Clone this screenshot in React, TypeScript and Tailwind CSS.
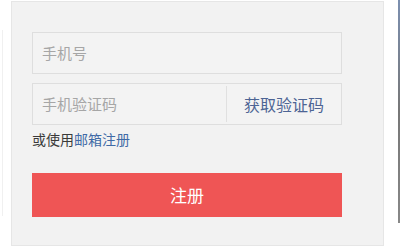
import React from 'react';

const font = { fontFamily: '"Noto Sans CJK SC", "Liberation Sans", sans-serif' };

export default function App() {
  return (
    <div className="flex h-[248px] w-[400px] bg-white overflow-hidden" style={font}>
      {/* left edge strip */}
      <div className="w-[11px] shrink-0 pl-[2px] pt-[30px]">
        <div className="h-[186px] w-px bg-[#f0f0f0]" />
      </div>

      {/* form panel */}
      <div className="mt-px h-[245px] w-[373px] shrink-0 border border-[#e6e6e6] bg-[#f2f2f2] px-[20px] pt-[30px]">
        <div className="flex h-[42px] w-[310px] items-center border border-[#dedede] bg-[#f3f3f3] px-[9px]">
          <span className="text-[15px] text-[#a6a6a6]">手机号</span>
        </div>

        <div className="mt-[9px] flex h-[42px] w-[310px] items-stretch border border-[#dedede] bg-[#f3f3f3]">
          <div className="flex flex-1 items-center px-[9px]">
            <span className="text-[15px] text-[#a6a6a6]">手机验证码</span>
          </div>
          <div className="my-[2px] w-px bg-[#e0e0e0]" />
          <div className="flex w-[114px] items-center justify-center">
            <span className="text-[16px] text-[#4d6494]">获取验证码</span>
          </div>
        </div>

        <div className="mt-[4px] text-[14px] leading-[20px] text-[#3a3a3a]">
          或使用<span className="text-[#3f6aa6]">邮箱注册</span>
        </div>

        <button className="mt-[24px] flex h-[44px] w-[310px] items-center justify-center bg-[#ef5555] text-[17px] text-white">
          注册
        </button>
      </div>

      {/* right edge strip */}
      <div className="flex flex-1 justify-end">
        <div className="h-[223px] w-[2px] bg-gradient-to-b from-[#7b8fb0] via-[#777] to-[#888]" />
      </div>
    </div>
  );
}
